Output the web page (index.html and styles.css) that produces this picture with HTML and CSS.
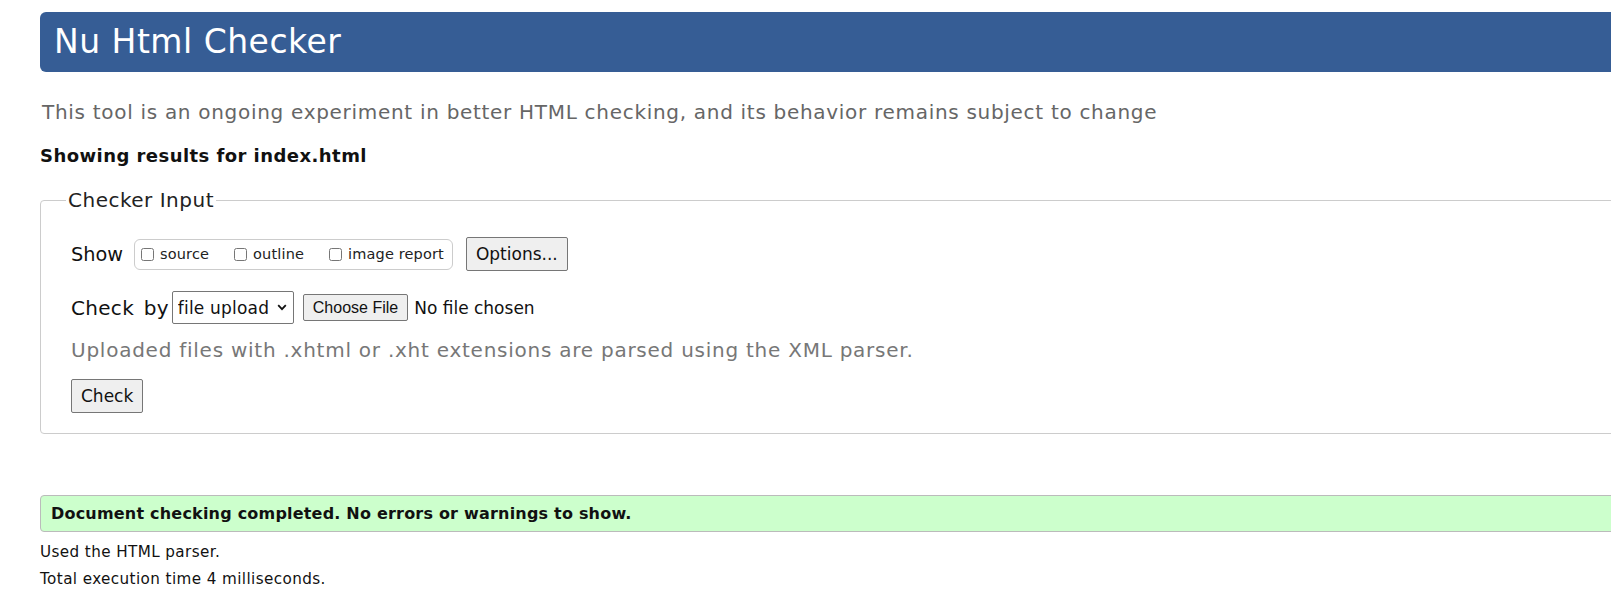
FILE: index.html
```html
<!DOCTYPE html>
<html lang="en">
<head>
<meta charset="utf-8">
<title>Nu Html Checker</title>
<link rel="stylesheet" href="styles.css">
</head>
<body>
<div class="page">
  <header class="banner"><h1>Nu Html Checker</h1></header>
  <p class="lede">This tool is an ongoing experiment in better HTML checking, and its behavior remains subject to change</p>
  <p class="target">Showing results for index.html</p>
  <form class="checker">
    <fieldset class="inputs">
      <legend>Checker Input</legend>
      <div class="row show-row">
        <span class="lbl show-lbl">Show</span>
        <span class="group">
          <label class="opt"><input type="checkbox">source</label>
          <label class="opt"><input type="checkbox">outline</label>
          <label class="opt"><input type="checkbox">image report</label>
        </span>
        <button type="button" class="btn options">Options...</button>
      </div>
      <div class="row by-row">
        <span class="lbl by-lbl">Check by</span>
        <span class="select-wrap">
          <select class="by"><option>file upload</option></select>
          <svg class="chev" width="10" height="7" viewBox="0 0 10 7"><path d="M1.2 1.2 L5 5.2 L8.8 1.2" fill="none" stroke="#111" stroke-width="1.8"/></svg>
        </span>
        <span class="filebtn">Choose File</span>
        <span class="nofile">No file chosen</span>
      </div>
      <p class="hint">Uploaded files with .xhtml or .xht extensions are parsed using the XML parser.</p>
      <button type="button" class="btn check">Check</button>
    </fieldset>
  </form>
  <p class="success">Document checking completed. No errors or warnings to show.</p>
  <p class="stats">Used the HTML parser.</p>
  <p class="stats">Total execution time 4 milliseconds.</p>
</div>
</body>
</html>
```

FILE: styles.css
```css
html, body {
  margin: 0;
  padding: 0;
  overflow: hidden;
  background: #fff;
}
body {
  font-family: "DejaVu Sans", Verdana, sans-serif;
  color: #111;
}
.page {
  padding: 12px 0 0 40px;
  margin-right: -120px;
}
.banner {
  background: #365d95;
  height: 60px;
  border-radius: 6px 0 0 6px;
}
.banner h1 {
  margin: 0;
  padding-left: 14px;
  font-size: 33px;
  font-weight: normal;
  line-height: 60px;
  letter-spacing: 0.5px;
  color: #fff;
}
.lede {
  margin: 28px 0 0 2px;
  font-size: 20px;
  line-height: 24px;
  letter-spacing: 0.7px;
  color: #666;
}
.target {
  margin: 21px 0 0 0;
  font-size: 18px;
  font-weight: bold;
  line-height: 22px;
  letter-spacing: 0.45px;
  color: #111;
}
.checker {
  margin-top: 21px;
}
.inputs {
  margin: 0;
  padding: 25px 28px 20px 30px;
  border: 1px solid #ccc;
  border-radius: 4px 0 0 4px;
  min-width: 0;
}
.inputs legend {
  font-size: 20px;
  line-height: normal;
  letter-spacing: 0.5px;
  padding: 0 2px;
  margin-left: -5px;
  color: #222;
}
.row {
  display: flex;
  align-items: center;
}
.lbl {
  font-size: 20px;
  color: #111;
}
.show-lbl {
  font-size: 19.3px;
  margin-right: 11px;
}
.group {
  display: inline-flex;
  align-items: center;
  height: 31px;
  padding: 0 8px 0 6px;
  border: 1px solid #ccc;
  border-radius: 6px;
  box-sizing: border-box;
}
.opt {
  display: inline-flex;
  align-items: center;
  font-size: 14.5px;
  letter-spacing: 0.15px;
  color: #222;
}
.opt + .opt {
  margin-left: 25px;
}
.opt input {
  margin: 0 6px 0 0;
  width: 13px;
  height: 13px;
}
.btn {
  font-family: "DejaVu Sans", Verdana, sans-serif;
  font-size: 17px;
  color: #111;
  background: #efefef;
  border: 1px solid #767676;
  border-radius: 2px;
  padding: 0 9px;
}
.options {
  height: 34px;
  margin-left: 13px;
}
.by-row {
  margin-top: 20px;
}
.by-lbl {
  word-spacing: 3px;
  letter-spacing: 0.3px;
}
.select-wrap {
  position: relative;
  display: inline-block;
  margin-left: 3px;
}
.by {
  display: block;
  appearance: none;
  -webkit-appearance: none;
  font-family: "DejaVu Sans", Verdana, sans-serif;
  font-size: 17px;
  letter-spacing: 0.2px;
  color: #111;
  background: #fff;
  border: 1px solid #767676;
  border-radius: 2px;
  height: 33px;
  width: 122px;
  padding: 0 18px 0 5px;
}
.chev {
  position: absolute;
  right: 7px;
  top: 13px;
}
.filebtn {
  display: inline-flex;
  align-items: center;
  margin-left: 9px;
  height: 27px;
  padding: 0 9px;
  box-sizing: border-box;
  font-family: "Liberation Sans", Arial, sans-serif;
  font-size: 16px;
  color: #111;
  background: #efefef;
  border: 1px solid #767676;
  border-radius: 2px;
}
.nofile {
  margin-left: 6px;
  font-size: 17px;
  color: #111;
}
.hint {
  margin: 14px 0 0 0;
  font-size: 20px;
  line-height: 24px;
  letter-spacing: 0.75px;
  color: #777;
}
.check {
  margin-top: 17px;
  height: 34px;
}
.success {
  margin: 61px 0 0 0;
  padding: 0 10px;
  height: 37px;
  line-height: 35px;
  box-sizing: border-box;
  background: #ccffcc;
  border: 1px solid #bbb;
  border-radius: 4px 0 0 4px;
  font-size: 16px;
  font-weight: bold;
  letter-spacing: 0.2px;
  color: #111;
}
.stats {
  margin: 10px 0 0 0;
  font-size: 15.2px;
  line-height: 20px;
  letter-spacing: 0.4px;
  color: #111;
}
.stats + .stats {
  margin-top: 7px;
}
```
